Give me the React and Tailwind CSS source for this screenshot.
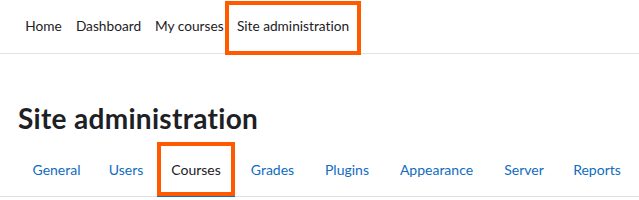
import React from "react";

const font = { fontFamily: 'Lato, "Noto Sans", sans-serif' };

const navItems = [
  { t: "Home", w: "w-[51px]" },
  { t: "Dashboard", w: "w-[79px]" },
  { t: "My courses", w: "w-[77px]", pl: "pl-[7px] justify-start" },
];

const tabs = [
  { t: "General", w: "w-[77px]" },
  { t: "Users", w: "w-[62px]" },
  { t: "Courses", w: "w-[78px]", active: true },
  { t: "Grades", w: "w-[75px]" },
  { t: "Plugins", w: "w-[74px]" },
  { t: "Appearance", w: "w-[105px]" },
  { t: "Server", w: "w-[70px]" },
  { t: "Reports", w: "w-[76px]" },
];

export default function App() {
  return (
    <div className="w-[639px] h-[200px] bg-white overflow-hidden [font-variant-ligatures:none]" style={font}>
      <nav className="h-[54px] border-b border-[#e2e2e2] flex items-stretch pl-[18px]">
        {navItems.map((n) => (
          <div
            key={n.t}
            className={
              n.w +
              " shrink-0 flex items-center text-[13.7px] text-[#1d2125] whitespace-nowrap " +
              (n.pl ? n.pl : "justify-center")
            }
          >
            {n.t}
          </div>
        ))}
        <div className="relative w-[136px] shrink-0 flex items-center justify-center text-[13.7px] text-[#1d2125] whitespace-nowrap">
          Site administration
          <div className="absolute left-0 right-0 top-[1px] bottom-[-2px] border-[4px] border-[#ff5a00]" />
        </div>
      </nav>
      <h2 className="mt-[48px] ml-[18px] text-[28px] leading-[32px] font-bold tracking-[0.3px] text-[#1d2125]">
        Site administration
      </h2>
      <div className="mt-[8px] flex border-b border-[#dee2e6] pl-[18px] h-[55px]">
        {tabs.map((tab) => (
          <div
            key={tab.t}
            className={
              tab.w +
              " relative shrink-0 flex items-center justify-center text-[14px] whitespace-nowrap " +
              (tab.active ? "text-[#1d2125]" : "text-[#0f6cbf]")
            }
          >
            {tab.t}
            {tab.active && (
              <>
                <div className="absolute left-0 right-0 bottom-[-1px] h-[1px] bg-[#0f6cbf]" />
                <div className="absolute left-0 right-0 top-0 bottom-0 border-[4px] border-[#ff5a00]" />
              </>
            )}
          </div>
        ))}
      </div>
    </div>
  );
}
